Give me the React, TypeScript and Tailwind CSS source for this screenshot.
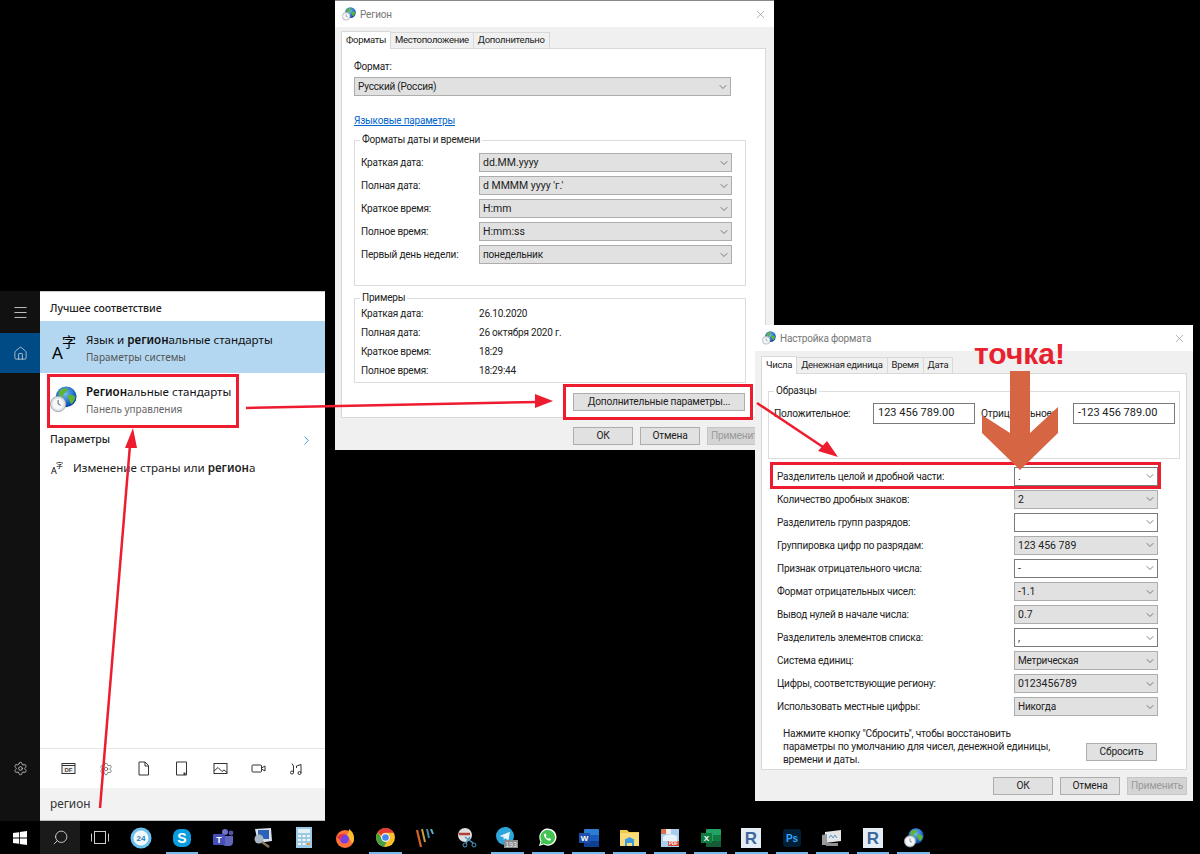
import React from "react";
import { Menu, Home, Settings, Search, ChevronRight, X, ChevronDown } from "lucide-react";

const Globe = ({ size = 30, clock = true }: { size?: number; clock?: boolean }) => (
  <svg width={size} height={size} viewBox="0 0 30 30">
    <defs>
      <radialGradient id="gl" cx="45%" cy="35%" r="70%">
        <stop offset="0%" stopColor="#6fc0f2" />
        <stop offset="70%" stopColor="#1a5fc4" />
        <stop offset="100%" stopColor="#0d3a8c" />
      </radialGradient>
    </defs>
    <circle cx="18" cy="12" r="11.5" fill="url(#gl)" />
    <path d="M10 6c3-3 7-4 9-3 1 2-1 4-3 5-2 2-1 4-3 5-2 0-4-3-3-7zM20 10c3-1 6 0 8 2 0 3-2 6-4 8-2-1-2-4-3-5-1-2-2-4-1-5z" fill="#5fb52f" />
    {clock && (
      <g>
        <circle cx="9" cy="20" r="8.5" fill="#dfe3e6" stroke="#9aa1a8" />
        <circle cx="9" cy="20" r="6" fill="#f7f8f9" />
        <path d="M9 15.5V20l3 1.5" stroke="#555" strokeWidth="1" fill="none" />
      </g>
    )}
  </svg>
);

const LangIcon = ({ big = false }: { big?: boolean }) => (
  <span className={`relative inline-block font-['Noto_Sans','Noto_Sans_CJK_SC',sans-serif] text-black ${big ? "w-[24px] h-[26px]" : "w-[12px] h-[13px]"}`}>
    <span className={`absolute left-0 bottom-0 leading-none ${big ? "text-[17px]" : "text-[9px]"}`}>A</span>
    <span className={`absolute right-0 top-0 leading-none ${big ? "text-[14px]" : "text-[7px]"}`}>字</span>
  </span>
);

// filter row of the search panel
const FilterIcon = ({ kind }: { kind: string }) => (
  <svg width="15" height="15" viewBox="0 0 15 15" fill="none" stroke="#333" strokeWidth="1">
    {kind === "web" && (
      <>
        <rect x="1" y="2.500" width="13" height="10" fill="#f4f4f4" />
        <path d="M1 4.500h13" />
        <text x="7.500" y="11" fontSize="6" fontWeight="700" textAnchor="middle" fill="#444" stroke="none" fontFamily="Liberation Sans">DF</text>
      </>
    )}
    {kind === "file" && <path d="M3 1h6l3.500 3.500V14H3zM9 1v4h3.500" />}
    {kind === "tablet" && (
      <>
        <path d="M2.500 1h10v13h-10z" />
        <path d="M10.500 11.500v2.500" strokeWidth="2" />
      </>
    )}
    {kind === "image" && (
      <>
        <rect x="1" y="2.500" width="13" height="10" />
        <path d="M1 10l4-3.500 4 4 2-1.500 3 2.500" />
      </>
    )}
    {kind === "video" && (
      <>
        <rect x="1" y="4" width="9.500" height="7" rx="1" />
        <path d="M10.500 7L14 5v5l-3.500-2" />
      </>
    )}
    {kind === "music" && (
      <>
        <circle cx="3" cy="11.500" r="1.500" />
        <circle cx="10.500" cy="12" r="1.500" />
        <path d="M4.500 11.500V5M12 12V3.500L7.500 5v2M3 2.500l1.500 2.500" />
      </>
    )}
  </svg>
);

const TaskIcon = ({ kind }: { kind: string }) => {
  switch (kind) {
    case "24":
      return (
        <svg width="22" height="22" viewBox="0 0 22 22">
          <circle cx="11" cy="11" r="10.500" fill="#6cc0ec" />
          <circle cx="11" cy="11" r="7.500" fill="#f3f8fb" />
          <text x="11" y="14" fontSize="8" fontWeight="700" textAnchor="middle" fill="#2a7fb8" fontFamily="Liberation Sans">24</text>
        </svg>
      );
    case "skype":
      return (
        <svg width="20" height="20" viewBox="0 0 20 20">
          <rect x="1" y="1" width="18" height="18" rx="7" fill="#0a9ee0" />
          <text x="10" y="15" fontSize="14" fontWeight="700" textAnchor="middle" fill="#fff" fontFamily="Liberation Sans">S</text>
        </svg>
      );
    case "teams":
      return (
        <svg width="22" height="20" viewBox="0 0 22 20">
          <circle cx="13" cy="4" r="3" fill="#6f73c9" />
          <circle cx="19" cy="5" r="2.400" fill="#5056a8" />
          <path d="M10 8h11v6a4 4 0 0 1-4 4h-3a4 4 0 0 1-4-4z" fill="#6167bd" />
          <rect x="1" y="6" width="12" height="11" rx="1" fill="#464eb8" />
          <text x="7" y="15" fontSize="9" fontWeight="700" textAnchor="middle" fill="#fff" fontFamily="Liberation Sans">T</text>
        </svg>
      );
    case "net":
      return (
        <svg width="20" height="22" viewBox="0 0 20 22">
          <path d="M2 2l16-1 1 13-14 2z" fill="#dbe1e6" />
          <rect x="5" y="3" width="11" height="9" fill="#2d62b8" />
          <circle cx="6" cy="12" r="4.500" fill="#a8b7c6" />
          <path d="M9 15l7 5" stroke="#8a7460" strokeWidth="2.500" />
        </svg>
      );
    case "calc":
      return (
        <svg width="16" height="21" viewBox="0 0 16 21">
          <rect width="16" height="21" fill="#9cc9e4" />
          <rect x="2" y="2" width="12" height="4" fill="#e6f1f7" />
          <path d="M2 8h3v2H2zM6.500 8h3v2h-3zM11 8h3v2h-3zM2 12h3v2H2zM6.500 12h3v2h-3zM11 12h3v2h-3zM2 16h3v2H2zM6.500 16h3v2h-3z" fill="#eef6fa" />
          <path d="M11 16h3v2h-3z" fill="#e9984a" />
        </svg>
      );
    case "firefox":
      return (
        <svg width="20" height="20" viewBox="0 0 20 20">
          <circle cx="10" cy="11" r="9" fill="#ff7139" />
          <path d="M14 1c3 2 5 5 5 9 0 3-1 4-2 6-1-4-3-7-6-8 2-2 3-4 3-7z" fill="#ffbd2e" />
          <circle cx="9.500" cy="11" r="4.500" fill="#7542e5" />
          <path d="M2 9c2-3 6-4 9-3-2 1-4 2-5 5-1 1-3 0-4-2z" fill="#e3314b" />
        </svg>
      );
    case "chrome":
      return (
        <svg width="19" height="19" viewBox="0 0 19 19">
          <circle cx="9.500" cy="9.500" r="9.500" fill="#fbc02d" />
          <path d="M9.500 0a9.500 9.500 0 0 1 8.200 4.750H9.500a4.750 4.750 0 0 0-4.400 3L1.800 4.200A9.500 9.500 0 0 1 9.500 0z" fill="#e53935" />
          <path d="M1.800 4.200l4 6.800a4.750 4.750 0 0 0 5 3.100L7.800 18.800A9.500 9.500 0 0 1 1.800 4.200z" fill="#43a047" />
          <circle cx="9.500" cy="9.500" r="4.300" fill="#fff" />
          <circle cx="9.500" cy="9.500" r="3.300" fill="#4285f4" />
        </svg>
      );
    case "stripes":
      return (
        <svg width="20" height="18" viewBox="0 0 20 18">
          <path d="M1 1l4 17" stroke="#d6642e" strokeWidth="2.200" />
          <path d="M6 0l3 13" stroke="#c9a13b" strokeWidth="2" />
          <path d="M11 0l2 9" stroke="#3f8ab0" strokeWidth="2" />
          <path d="M15 0l2 5" stroke="#5fb0c8" strokeWidth="2" />
        </svg>
      );
    case "scissors":
      return (
        <svg width="20" height="20" viewBox="0 0 20 20">
          <circle cx="8" cy="7" r="7" fill="#dfdfdf" />
          <path d="M2 6h11" stroke="#b33c3c" strokeWidth="2.500" />
          <path d="M8 9l8 6M13 9l-4 6" stroke="#4d97c2" strokeWidth="1.500" />
          <circle cx="17" cy="17" r="2" fill="none" stroke="#4d97c2" />
          <circle cx="8" cy="17" r="2" fill="none" stroke="#4d97c2" />
        </svg>
      );
    case "telegram":
      return (
        <svg width="22" height="22" viewBox="0 0 22 22">
          <circle cx="9" cy="9" r="9" fill="#2ea6da" />
          <path d="M3.500 9L14 4.800l-1.600 8.700-3.100-2.300-1.500 1.500-.4-2.700z" fill="#e8f5fb" />
          <rect x="8" y="13" width="14" height="8" fill="#8a8a8a" />
          <text x="15" y="20" fontSize="7" textAnchor="middle" fill="#eee" fontFamily="Liberation Sans">193</text>
        </svg>
      );
    case "whatsapp":
      return (
        <svg width="19" height="19" viewBox="0 0 19 19">
          <path d="M1 18l1.400-4.700A8.600 8.600 0 1 1 5.700 16.600z" fill="#fff" />
          <path d="M2.500 16.500l1-3.400a7.300 7.300 0 1 1 2.600 2.500z" fill="#40c351" />
          <path d="M6.800 5.500c-1.500 1-1 3 .8 5 1.800 2 3.900 2.800 5 1.500l.4-1-2-1-.8.800c-1-.4-1.900-1.300-2.400-2.400l.7-.8-.9-2.100z" fill="#fff" />
        </svg>
      );
    case "word":
      return (
        <svg width="20" height="18" viewBox="0 0 20 18">
          <rect x="5" width="15" height="18" rx="1" fill="#2b7cd3" />
          <rect x="5" y="6" width="15" height="6" fill="#185abd" />
          <rect x="5" y="12" width="15" height="6" fill="#103f91" />
          <rect y="4" width="11" height="10" fill="#1e4fa8" />
          <text x="5.500" y="12" fontSize="8" fontWeight="700" textAnchor="middle" fill="#fff" fontFamily="Liberation Sans">W</text>
        </svg>
      );
    case "explorer":
      return (
        <svg width="19" height="16" viewBox="0 0 19 16">
          <path d="M0 0h7l2 2h10v14H0z" fill="#f2c94c" />
          <rect y="3" width="19" height="13" fill="#f8dc7a" />
          <path d="M5 10h9v6h-2v-3H7v3H5z" fill="#3d9be0" />
          <path d="M4 10l5.500-3 5.500 3z" fill="#3d9be0" />
        </svg>
      );
    case "pdf":
      return (
        <svg width="18" height="18" viewBox="0 0 18 18">
          <rect width="18" height="18" fill="#a9cdec" />
          <path d="M0 0h5v5H0z" fill="#d8724c" />
          <path d="M5 0h5v5H5z" fill="#eeeeee" />
          <path d="M2 8c4-3 8-3 14-1v5H2z" fill="#e8f2fa" />
          <rect x="7" y="12" width="11" height="5" fill="#d6452f" />
          <text x="12.500" y="16" fontSize="4.500" fontWeight="700" textAnchor="middle" fill="#fff" fontFamily="Liberation Sans">PDF</text>
        </svg>
      );
    case "excel":
      return (
        <svg width="20" height="18" viewBox="0 0 20 18">
          <rect x="5" width="15" height="18" rx="1" fill="#21a366" />
          <rect x="12" y="6" width="8" height="6" fill="#107c41" />
          <rect x="5" y="12" width="15" height="6" fill="#185c37" />
          <rect y="4" width="11" height="10" fill="#107c41" />
          <text x="5.500" y="12" fontSize="8" fontWeight="700" textAnchor="middle" fill="#fff" fontFamily="Liberation Sans">X</text>
        </svg>
      );
    case "revit":
      return (
        <svg width="20" height="20" viewBox="0 0 20 20">
          <rect width="20" height="20" fill="#e4edf4" />
          <text x="10" y="16" fontSize="17" fontWeight="700" textAnchor="middle" fill="#40689c" fontFamily="Liberation Sans">R</text>
        </svg>
      );
    case "ps":
      return (
        <svg width="18" height="18" viewBox="0 0 18 18">
          <rect width="18" height="18" rx="3" fill="#001e36" />
          <text x="9" y="13" fontSize="10" fontWeight="700" textAnchor="middle" fill="#31a8ff" fontFamily="Liberation Sans">Ps</text>
        </svg>
      );
    case "monitor":
      return (
        <svg width="20" height="18" viewBox="0 0 20 18">
          <path d="M3 3l16-2v11L3 14z" fill="#e3e5e7" />
          <path d="M7 9l2-3 2 3 2-3 2 3" stroke="#5a9bd0" fill="none" />
          <path d="M0 6l5-1v11H0z" fill="#9a9da0" />
          <path d="M4 14h12v3H4z" fill="#8d9093" />
        </svg>
      );
    default:
      return <Globe size={20} />;
  }
};

const taskbarApps = [
  { kind: "24", on: false },
  { kind: "skype", on: true },
  { kind: "teams", on: false },
  { kind: "net", on: false },
  { kind: "calc", on: false },
  { kind: "firefox", on: false },
  { kind: "chrome", on: true },
  { kind: "stripes", on: false },
  { kind: "scissors", on: false },
  { kind: "telegram", on: true },
  { kind: "whatsapp", on: true },
  { kind: "word", on: true },
  { kind: "explorer", on: true },
  { kind: "pdf", on: true },
  { kind: "excel", on: true },
  { kind: "revit", on: true },
  { kind: "ps", on: true },
  { kind: "monitor", on: true },
  { kind: "revit", on: true },
  { kind: "globe", on: true },
];

const Select = ({ value, white = false, width }: { value: string; white?: boolean; width: string }) => {
  // Cyrillic values run narrower than digits and latin in the original font
  const cyr = /[а-яё]{3}/i.test(value) && !/\d/.test(value);
  return (
    <div className={`h-[19px] flex items-center justify-between pl-[3px] pr-[1px] border ${white ? "bg-white border-[#7a7a7a]" : "bg-[#e1e1e1] border-[#adadad]"} ${width}`}>
      <span className={`text-[#222] leading-[17px] ${cyr ? "text-[10px]" : "text-[10.5px] tracking-[0px]"}`}>{value}</span>
      <ChevronDown size={12} strokeWidth={1.200} className="text-[#333]" />
    </div>
  );
};

const Btn = ({ children, width, muted = false }: { children: React.ReactNode; width: string; muted?: boolean }) => (
  <div className={`h-[18px] flex items-center justify-center border text-[10.2px] ${muted ? "bg-[#d4d4d4] border-[#c6c6c6] text-[#9a9a9a]" : "bg-[#e1e1e1] border-[#adadad] text-[#222]"} ${width}`}>
    {children}
  </div>
);

const TitleBar = ({ title }: { title: string }) => (
  <div className="h-[26px] bg-white flex items-center justify-between pl-[7px] pr-[7px]">
    <div className="flex items-center gap-[4px]">
      <Globe size={14} />
      <span className="text-[10px] text-[#777]">{title}</span>
    </div>
    <X size={13} strokeWidth={1} className="text-[#777]" />
  </div>
);

const Tabs = ({ items }: { items: string[] }) => (
  <div className="flex items-end h-[22px]">
    {items.map((t, i) => (
      <div
        key={t}
        className={`px-[4px] border border-b-0 border-[#d9d9d9] text-[9.5px] tracking-[-0.3px] text-[#222] flex items-center justify-center -ml-px first:ml-0 ${i === 0 ? "h-[18px] bg-white -mb-px z-10" : "h-[16px] bg-[#f0f0f0]"}`}
      >
        {t}
      </div>
    ))}
  </div>
);

const Group = ({ title, className, children }: { title: string; className: string; children: React.ReactNode }) => (
  <div className={`relative border border-[#dcdcdc] ${className}`}>
    <span className="absolute left-[5px] -top-[8px] bg-white px-[2px] text-[10px] leading-[14px] text-[#222]">{title}</span>
    {children}
  </div>
);

const dateRows = [
  ["Краткая дата:", "dd.MM.yyyy"],
  ["Полная дата:", "d MMMM yyyy 'г.'"],
  ["Краткое время:", "H:mm"],
  ["Полное время:", "H:mm:ss"],
  ["Первый день недели:", "понедельник"],
];

const sampleRows = [
  ["Краткая дата:", "26.10.2020"],
  ["Полная дата:", "26 октября 2020 г."],
  ["Краткое время:", "18:29"],
  ["Полное время:", "18:29:44"],
];

const formatRows = [
  ["Разделитель целой и дробной части:", ".", true],
  ["Количество дробных знаков:", "2", false],
  ["Разделитель групп разрядов:", "", true],
  ["Группировка цифр по разрядам:", "123 456 789", false],
  ["Признак отрицательного числа:", "-", true],
  ["Формат отрицательных чисел:", "-1.1", false],
  ["Вывод нулей в начале числа:", "0.7", false],
  ["Разделитель элементов списка:", ",", true],
  ["Система единиц:", "Метрическая", false],
  ["Цифры, соответствующие региону:", "0123456789", false],
  ["Использовать местные цифры:", "Никогда", false],
] as const;

const RegionWindow = () => (
  <div className="absolute left-[335px] top-0 w-[439px] h-[450px] bg-[#f0f0f0] flex flex-col border-t border-[#8a8a8a] font-['Roboto',sans-serif] tracking-[-0.2px]">
    <TitleBar title="Регион" />
    <div className="pl-[6px] pr-[7px] flex flex-col flex-1 -mt-px">
      <Tabs items={["Форматы", "Местоположение", "Дополнительно"]} />
      <div className="w-[425px] h-[370px] bg-white border border-[#d9d9d9] pl-[12px] pt-[11px] flex flex-col">
        <span className="text-[10px] leading-[14px] text-[#222] mb-[3px]">Формат:</span>
        <Select value="Русский (Россия)" width="w-[377px]" />
        <span className="mt-[18px] text-[10px] leading-[14px] text-[#0066cc] underline">Языковые параметры</span>
        <Group title="Форматы даты и времени" className="mt-[12px] w-[392px] h-[146px] pl-[6px] pt-[10px]">
          {dateRows.map(([label, value]) => (
            <div key={label} className="h-[23px] flex items-center">
              <span className="w-[118px] text-[10px] text-[#222]">{label}</span>
              <Select value={value} width="w-[253px]" />
            </div>
          ))}
        </Group>
        <Group title="Примеры" className="mt-[12px] w-[392px] h-[85px] pl-[6px] pt-[5px]">
          {sampleRows.map(([label, value]) => (
            <div key={label} className="h-[19px] flex items-center">
              <span className="w-[118px] text-[10px] text-[#222]">{label}</span>
              <span className="text-[10px] text-[#222]">{value}</span>
            </div>
          ))}
        </Group>
        <div className="mt-[10px] pl-[219px]">
          <Btn width="w-[172px]">Дополнительные параметры...</Btn>
        </div>
      </div>
      <div className="flex justify-end gap-[7px] pt-[9px]">
        <Btn width="w-[60px]">ОК</Btn>
        <Btn width="w-[60px]">Отмена</Btn>
        <Btn width="w-[60px]" muted>Применить</Btn>
      </div>
    </div>
  </div>
);

const FormatWindow = () => (
  <div className="absolute left-[755px] top-[325px] w-[438px] h-[476px] bg-[#f0f0f0] flex flex-col font-['Roboto',sans-serif] tracking-[-0.2px]">
    <TitleBar title="Настройка формата" />
    <div className="pl-[6px] flex flex-col">
      <Tabs items={["Числа", "Денежная единица", "Время", "Дата"]} />
      <div className="w-[426px] h-[397px] bg-white border border-[#d9d9d9] pl-[6px] pt-[17px] flex flex-col">
        <Group title="Образцы" className="w-[412px] h-[68px] pl-[5px] pt-[11px]">
          <div className="flex items-center">
            <span className="w-[99px] text-[10.2px] text-[#222]">Положительное:</span>
            <div className="w-[102px] h-[21px] border border-[#7a7a7a] px-[4px] text-[11px] tracking-[0px] leading-[17px] text-[#222]">123 456 789.00</div>
            <span className="w-[98px] pl-[6px] text-[10.2px] text-[#222] whitespace-nowrap">Отрицательное:</span>
            <div className="w-[102px] h-[21px] border border-[#7a7a7a] px-[4px] text-[11px] tracking-[0px] leading-[17px] text-[#222]">-123 456 789.00</div>
          </div>
        </Group>
        <div className="mt-[5.5px] pl-[9px] flex flex-col">
          {formatRows.map(([label, value, white]) => (
            <div key={label} className="h-[23.1px] flex items-center">
              <span className="w-[237px] text-[10px] text-[#222]">{label}</span>
              <Select value={value} white={white} width="w-[144px]" />
            </div>
          ))}
        </div>
        <div className="mt-[8px] pl-[15px] flex items-start">
          <p className="w-[303px] text-[10.2px] leading-[13px] text-[#222]">
            Нажмите кнопку "Сбросить", чтобы восстановить<br />
            параметры по умолчанию для чисел, денежной единицы,<br />
            времени и даты.
          </p>
          <div className="mt-[16px]">
            <Btn width="w-[71px]">Сбросить</Btn>
          </div>
        </div>
      </div>
      <div className="flex justify-end gap-[7px] pt-[7px] pr-[6px]">
        <Btn width="w-[60px]">ОК</Btn>
        <Btn width="w-[60px]">Отмена</Btn>
        <Btn width="w-[60px]" muted>Применить</Btn>
      </div>
    </div>
  </div>
);

const SearchPanel = () => (
  <div className="absolute left-0 top-[291px] w-[325px] h-[530px] flex">
    <div className="w-[40px] bg-[#111] flex flex-col text-[#ddd]">
      <div className="h-[42px] pt-[1px] flex items-center justify-center"><Menu size={17} strokeWidth={1.200} /></div>
      <div className="h-[40px] bg-[#004b85] flex items-center justify-center"><Home size={15} strokeWidth={1.200} /></div>
      <div className="flex-1" />
      <div className="h-[60px] flex items-start justify-center"><Settings size={15} strokeWidth={1.200} /></div>
    </div>
    <div className="w-[285px] bg-white flex flex-col border-t border-[#c8c8c8]">
      <div className="h-[29px] pt-[4px] flex items-center pl-[10px] text-[10.5px] font-medium text-[#222]">Лучшее соответствие</div>
      <div className="h-[52px] bg-[#b3d7f0] flex items-center pl-[12px] gap-[10px] pt-[1px]">
        <LangIcon big />
        <div className="flex flex-col">
          <span className="text-[11.6px] leading-[18px] text-[#111]">Язык и <b className="font-semibold">регион</b>альные стандарты</span>
          <span className="text-[10px] leading-[16px] text-[#555]">Параметры системы</span>
        </div>
      </div>
      <div className="h-[52px] flex items-center pl-[10px] gap-[9px] pt-[1px]">
        <Globe size={27} />
        <div className="flex flex-col">
          <span className="text-[11.6px] leading-[18px] text-[#111]"><b className="font-semibold">Регион</b>альные стандарты</span>
          <span className="text-[10px] leading-[16px] text-[#666]">Панель управления</span>
        </div>
      </div>
      <div className="h-[28px] mt-[1px] flex items-center justify-between pl-[10px] pr-[11px]">
        <span className="text-[10.5px] font-medium text-[#222]">Параметры</span>
        <ChevronRight size={15} strokeWidth={1.400} className="text-[#2f8fdc]" />
      </div>
      <div className="h-[28px] flex items-center pl-[11px] gap-[10px]">
        <LangIcon />
        <span className="text-[11.6px] text-[#222]">Изменение страны или <b className="font-semibold">регион</b>а</span>
      </div>
      <div className="flex-1" />
      <div className="h-[40px] border-t border-[#e6e6e6] flex items-center justify-between pl-[21px] pr-[21px]">
        <FilterIcon kind="web" />
        <Settings size={14} strokeWidth={1} className="text-[#333]" />
        <FilterIcon kind="file" />
        <FilterIcon kind="tablet" />
        <FilterIcon kind="image" />
        <FilterIcon kind="video" />
        <FilterIcon kind="music" />
      </div>
      <div className="h-[33px] bg-[#f2f2f2] border-b border-[#bdbdbd] flex items-center pl-[10px] text-[11.8px] text-[#333]">регион</div>
    </div>
  </div>
);

const Taskbar = () => (
  <div className="absolute left-0 bottom-0 w-[1200px] h-[33px] bg-black flex items-stretch text-[#ddd]">
    <div className="w-[40px] flex items-center justify-center">
      <svg width="14" height="14" viewBox="0 0 14 14" fill="#fff">
        <path d="M0 2l6-.8V6.600H0zM6.800 1l7.200-1v6.600H6.800zM0 7.400h6v5.400L0 12zM6.800 7.400H14V14l-7.200-1z" />
      </svg>
    </div>
    <div className="w-[40px] bg-[#1a1a1a] flex items-center justify-center"><Search size={17} strokeWidth={1.200} className="-scale-x-100" /></div>
    <div className="w-[41px] flex items-center justify-center pr-[2px]">
      <svg width="18" height="13" viewBox="0 0 18 13" fill="none" stroke="#ccc">
        <rect x="3.500" y=".5" width="11" height="12" />
        <path d="M.5 2.500v8M17.500 2.500v8" />
      </svg>
    </div>
    {taskbarApps.map((a, i) => (
      <div key={i} className="relative w-[40.67px] flex items-center justify-center">
        <TaskIcon kind={a.kind} />
        {a.on && <div className="absolute bottom-0 left-[4px] right-[4px] h-[2px] bg-[#76b9ed]" />}
      </div>
    ))}
  </div>
);

const Annotations = () => (
  <>
    <div className="absolute left-[47px] top-[374px] w-[192px] h-[54px] border-[3px] border-[#ed1c2e]" />
    <div className="absolute left-[563px] top-[384px] w-[190px] h-[36px] border-[3px] border-[#ed1c2e]" />
    <div className="absolute left-[770px] top-[462px] w-[391px] h-[27px] border-[3px] border-[#ed1c2e]" />
    <svg className="absolute left-0 top-0 pointer-events-none" width="1200" height="854" viewBox="0 0 1200 854">
      <g stroke="#ed1c2e" strokeWidth="2.500" fill="none">
        <path d="M100 808L130 445" />
        <path d="M246 408L538 402" />
        <path d="M757 403L826 449" />
      </g>
      <g fill="#ed1c2e">
        <path d="M133 428L125 448L137 448z" />
        <path d="M553 401L535 394L535 408z" />
        <path d="M838 457L818 451L827 441z" />
      </g>
      <path d="M1010 371H1030V433L1058 407V433L1020 470L982 433V415L1010 433z" fill="#d66543" />
    </svg>
    <span className="absolute left-[974px] top-[336px] text-[30px] leading-[36px] font-bold text-[#e8212e] font-['Liberation_Sans',sans-serif]">точка!</span>
  </>
);

export default function App() {
  return (
    <div className="relative w-[1200px] h-[854px] bg-black overflow-hidden font-['Noto_Sans',sans-serif]">
      <RegionWindow />
      <FormatWindow />
      <SearchPanel />
      <Taskbar />
      <Annotations />
    </div>
  );
}
